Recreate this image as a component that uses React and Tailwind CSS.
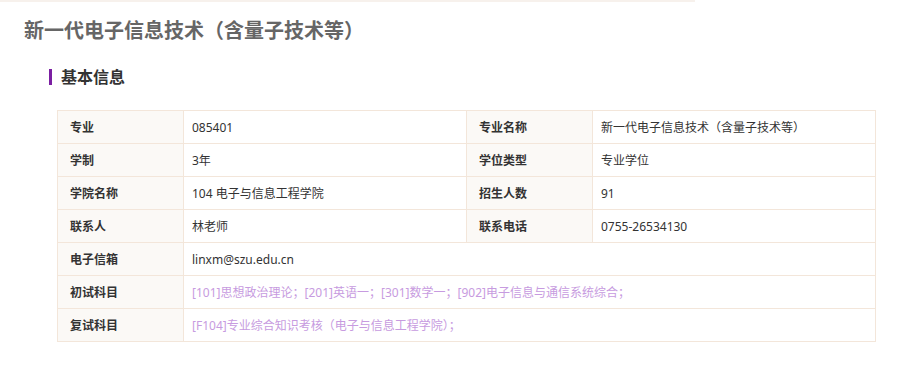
// 专业详情：基本信息表
const rows = [
  [['专业', '085401'], ['专业名称', '新一代电子信息技术（含量子技术等）']],
  [['学制', '3年'], ['学位类型', '专业学位']],
  [['学院名称', '104 电子与信息工程学院'], ['招生人数', '91']],
  [['联系人', '林老师'], ['联系电话', '0755-26534130']],
  [['电子信箱', 'linxm@szu.edu.cn']],
  [['初试科目', '[101]思想政治理论；[201]英语一；[301]数学一；[902]电子信息与通信系统综合；', true]],
  [['复试科目', '[F104]专业综合知识考核（电子与信息工程学院）；', true]]
];

const font = "font-['Noto_Sans','Noto_Sans_CJK_SC',sans-serif]";

export default function App() {
  return (
    <div className={`min-h-screen w-[910px] bg-white ${font}`}>
      <div className="h-[2px] w-[695px] bg-[#f7f1ec]" />
      <h1 className="ml-6 mt-[17px] text-[20px] font-bold leading-[24px] text-[#666]">
        新一代电子信息技术（含量子技术等）
      </h1>
      <div className="ml-[49px] mt-[24px] flex items-center gap-[9px]">
        <span className="h-[16px] w-[3px] bg-[#7b1fa2]" />
        <h2 className="text-[16px] font-semibold leading-[20px] text-[#333]">基本信息</h2>
      </div>
      <table className="ml-[57px] mt-[23px] w-[819px] border-collapse text-[12px] text-[#333]">
        <colgroup>
          <col className="w-[126px]" />
          <col className="w-[283px]" />
          <col className="w-[126px]" />
          <col />
        </colgroup>
        <tbody>
          {rows.map((row, i) => (
            <tr key={i} className="h-[33px]">
              {row.map(([label, value, accent], j) => (
                <Cell key={j} label={label} value={value} accent={accent} wide={row.length === 1} />
              ))}
            </tr>
          ))}
        </tbody>
      </table>
    </div>
  );
}

function Cell({ label, value, accent, wide }) {
  return (
    <>
      <td className="border border-[#f3e6da] bg-[#fbf9f6] pl-[12px] pt-[2px] font-bold">{label}</td>
      <td
        colSpan={wide ? 3 : 1}
        className={`border border-[#f3e6da] pl-[8px] pt-[2px] ${accent ? 'text-[#c79be0]' : ''}`}
      >
        {value}
      </td>
    </>
  );
}
